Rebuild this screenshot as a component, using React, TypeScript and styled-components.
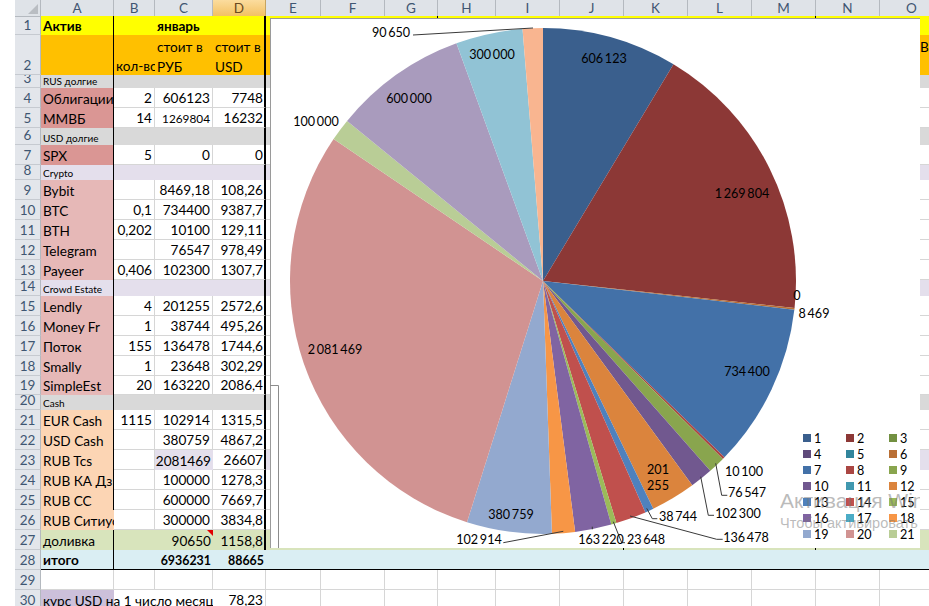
import React from "react";
import styled, { createGlobalStyle } from "styled-components";

const FONT = `Lato, "Open Sans", "Liberation Sans", sans-serif`;
const GRID = "#d6d6d6";
const COLS = "26px 73px 41px 58px 53px 55px 64px 53px 58px 64px 64px 64px 64px 64px 64px 64px";

const Global = createGlobalStyle`
  html, body { margin: 0; padding: 0; background: #fff; overflow: hidden; }
  #root { width: 929px; height: 606px; }
`;

const Screen = styled.div`
  position: relative;
  width: 929px;
  height: 606px;
  overflow: hidden;
  background: #fff;
  font-family: ${FONT};
`;

const Sheet = styled.div`
  display: flex;
  flex-direction: column;
  margin-left: 15px;
  width: 1000px;
`;

const HeaderRow = styled.div`
  display: grid;
  grid-template-columns: ${COLS};
  height: 16px;
`;

const Corner = styled.div`
  position: relative;
  background: #dfe3e8;
  border-right: 1px solid #b4b9bf;
  border-bottom: 1px solid #b4b9bf;
  box-sizing: border-box;
  &::after {
    content: "";
    position: absolute;
    right: 2px;
    bottom: 2px;
    border-style: solid;
    border-width: 0 0 10px 10px;
    border-color: transparent transparent #b9bdc2 transparent;
  }
`;

const ColumnLetter = styled.div<{ $active?: boolean }>`
  box-sizing: border-box;
  display: flex;
  align-items: center;
  justify-content: center;
  font-size: 13.5px;
  line-height: 16px;
  color: ${(p) => (p.$active ? "#6a4a20" : "#3f5672")};
  background: ${(p) => (p.$active ? "linear-gradient(#fbdc9e, #f3c163)" : "#dfe3e8")};
  border-right: 1px solid ${(p) => (p.$active ? "#c6a45f" : "#b4b9bf")};
  border-bottom: 1px solid ${(p) => (p.$active ? "#c6a45f" : "#b4b9bf")};
`;

const Row = styled.div<{ $h: number }>`
  display: grid;
  grid-template-columns: ${COLS};
  height: ${(p) => p.$h}px;
`;

const RowNumber = styled.div`
  box-sizing: border-box;
  display: flex;
  align-items: flex-end;
  justify-content: center;
  font-size: 13.5px;
  line-height: 17px;
  color: #3f5672;
  background: #e3e6eb;
  border-right: 1px solid #b4b9bf;
  border-bottom: 1px solid #c6cad0;
  overflow: hidden;
`;

const Cell = styled.div<{
  $fill?: string;
  $right?: boolean;
  $small?: boolean;
  $bold?: boolean;
  $lineRight?: "thin" | "thick";
  $bottom?: boolean;
  $size?: number;
}>`
  position: relative;
  box-sizing: border-box;
  min-width: 0;
  display: flex;
  align-items: flex-end;
  justify-content: ${(p) => (p.$right ? "flex-end" : "flex-start")};
  padding: 0 ${(p) => (p.$lineRight === "thick" ? "1px" : "2px")} 0 2px;
  overflow: hidden;
  white-space: nowrap;
  color: #000;
  font-size: ${(p) => (p.$size ? p.$size : p.$small ? 10 : 13.6)}px;
  line-height: ${(p) => (p.$small ? 14 : 17)}px;
  font-weight: ${(p) => (p.$bold ? 700 : 400)};
  background: ${(p) => p.$fill ?? "#fff"};
  border-right: ${(p) =>
    p.$lineRight === "thin"
      ? "1px solid #000"
      : p.$lineRight === "thick"
        ? "2px solid #000"
        : p.$fill
          ? "none"
          : `1px solid ${GRID}`};
  border-bottom: ${(p) =>
    p.$bottom ? "1px solid #000" : p.$fill ? "none" : `1px solid ${GRID}`};
`;

const Wrapped = styled.span`
  white-space: normal;
  line-height: 20px;
  margin-bottom: -2px;
`;

const OverflowLabel = styled(Cell)`
  grid-column: span 3;
  background: linear-gradient(#ccc0da, #ccc0da) 0 0 / 73px 100% no-repeat;
  border-right: none;
  border-bottom: none;
  padding-left: 2px;
`;

const Comment = styled.span`
  position: absolute;
  top: 0;
  right: 0;
  border-style: solid;
  border-width: 0 6px 6px 0;
  border-color: transparent #e00000 transparent transparent;
`;

const Tick = styled(Cell)`
  border-right: 1px solid #000;
`;

const EdgeLetter = styled.span`
  align-self: flex-start;
  margin: 4px 0 0 38px;
  line-height: 17px;
`;

const ChartPanel = styled.div`
  position: absolute;
  left: 270px;
  top: 18px;
  width: 650px;
  height: 530px;
  background: #fff;
  box-sizing: border-box;
  box-shadow: inset 1px 1px 0 #9a9a9a;
`;

const ChartArt = styled.svg`
  display: block;
  width: 650px;
  height: 530px;
`;

const ChartLabel = styled.text`
  font-family: ${FONT};
  font-size: 12.6px;
  word-spacing: -1.5px;
  fill: #000;
  text-anchor: middle;
  dominant-baseline: central;
`;

const Legend = styled.div`
  position: absolute;
  left: 533px;
  top: 412px;
  display: grid;
  grid-template-columns: repeat(3, 43px);
  grid-auto-rows: 16px;
`;

const LegendItem = styled.div`
  display: flex;
  align-items: center;
  gap: 3px;
  font-size: 12.6px;
  color: #000;
`;

const Swatch = styled.i<{ $c: string }>`
  display: block;
  width: 8px;
  height: 8px;
  background: ${(p) => p.$c};
`;

const Watermark = styled.div`
  position: absolute;
  left: 780px;
  top: 489px;
  width: 140px;
  overflow: hidden;
  white-space: nowrap;
  color: rgba(120, 120, 120, 0.5);
  font-family: "Liberation Sans", sans-serif;
  pointer-events: none;
`;

const WatermarkTitle = styled.div`
  font-size: 21px;
  line-height: 24px;
`;

const WatermarkHint = styled.div`
  font-size: 14.5px;
  line-height: 20px;
`;

const GRAY = "#d9d9d9";
const LILAC = "#e4dfec";
const ROSE = "#da9694";
const PINK = "#e6b8b7";
const PEACH = "#fcd5b4";
const GREEN = "#d8e4bc";
const SKY = "#daeef3";
const YELLOW = "#ffff00";
const ORANGE = "#ffc000";

type R = {
  n: number;
  h: number;
  a?: string;
  b?: string;
  c?: string;
  d?: string;
  af?: string;
  fill?: string;
  small?: boolean;
  cSize?: number;
};

const rows: R[] = [
  { n: 3, h: 13, a: "RUS долгие", af: GRAY, fill: GRAY, small: true },
  { n: 4, h: 20, a: "Облигации", af: ROSE, b: "2", c: "606123", d: "7748" },
  { n: 5, h: 20, a: "ММВБ", af: ROSE, b: "14", c: "1269804", d: "16232", cSize: 11.8 },
  { n: 6, h: 17, a: "USD долгие", af: GRAY, fill: GRAY, small: true },
  { n: 7, h: 20, a: "SPX", af: ROSE, b: "5", c: "0", d: "0" },
  { n: 8, h: 15, a: "Crypto", af: LILAC, fill: LILAC, small: true },
  { n: 9, h: 20, a: "Bybit", af: PINK, c: "8469,18", d: "108,26" },
  { n: 10, h: 20, a: "BTC", af: PINK, b: "0,1", c: "734400", d: "9387,7" },
  { n: 11, h: 20, a: "BTH", af: PINK, b: "0,202", c: "10100", d: "129,11" },
  { n: 12, h: 20, a: "Telegram", af: PINK, c: "76547", d: "978,49" },
  { n: 13, h: 20, a: "Payeer", af: PINK, b: "0,406", c: "102300", d: "1307,7" },
  { n: 14, h: 16, a: "Crowd Estate", af: LILAC, fill: LILAC, small: true },
  { n: 15, h: 20, a: "Lendly", af: PINK, b: "4", c: "201255", d: "2572,6" },
  { n: 16, h: 20, a: "Money Fr", af: PINK, b: "1", c: "38744", d: "495,26" },
  { n: 17, h: 20, a: "Поток", af: PINK, b: "155", c: "136478", d: "1744,6" },
  { n: 18, h: 20, a: "Smally", af: PINK, b: "1", c: "23648", d: "302,29" },
  { n: 19, h: 19, a: "SimpleEst", af: PINK, b: "20", c: "163220", d: "2086,4" },
  { n: 20, h: 15, a: "Cash", af: GRAY, fill: GRAY, small: true },
  { n: 21, h: 20, a: "EUR Cash", af: PEACH, b: "1115", c: "102914", d: "1315,5" },
  { n: 22, h: 20, a: "USD Cash", af: PEACH, c: "380759", d: "4867,2" },
  { n: 23, h: 20, a: "RUB Tcs", af: PEACH, c: "2081469", d: "26607" },
  { n: 24, h: 20, a: "RUB КА Дз", af: PEACH, c: "100000", d: "1278,3" },
  { n: 25, h: 20, a: "RUB CC", af: PEACH, c: "600000", d: "7669,7" },
  { n: 26, h: 20, a: "RUB Ситиус", af: PEACH, c: "300000", d: "3834,8" },
];

const letters = ["A", "B", "C", "D", "E", "F", "G", "H", "I", "J", "K", "L", "M", "N", "O"];
const blankCols = letters.slice(4);

const Blanks = ({
  fill,
  bottom,
  ticks = [],
  edge,
}: {
  fill?: string;
  bottom?: boolean;
  ticks?: string[];
  edge?: string;
}) => (
  <>
    {blankCols.map((l) =>
      ticks.includes(l) ? (
        <Tick key={l} $fill={fill} $bottom={bottom} />
      ) : (
        <Cell key={l} $fill={fill} $bottom={bottom}>
          {l === "O" && edge ? <EdgeLetter>{edge}</EdgeLetter> : null}
        </Cell>
      ),
    )}
  </>
);

const CX = 543;
const CY = 281;
const RAD = 253;

const slices: [number, string][] = [
  [606123, "#3a5f8d"],
  [1269804, "#8c3836"],
  [8469, "#b96f35"],
  [734400, "#4371a8"],
  [10100, "#aa4643"],
  [76547, "#89a54e"],
  [102300, "#71588f"],
  [201255, "#db843d"],
  [38744, "#4f81bd"],
  [136478, "#c0504d"],
  [23648, "#9bbb59"],
  [163220, "#8064a2"],
  [102914, "#f79646"],
  [380759, "#93a9cf"],
  [2081469, "#d19392"],
  [100000, "#b9cd96"],
  [600000, "#a99bbd"],
  [300000, "#91c3d5"],
  [90650, "#f9b590"],
];

const total = slices.reduce((s, [v]) => s + v, 0);

function slicePaths() {
  let cum = 0;
  return slices.map(([v, c]) => {
    const a0 = (cum / total) * Math.PI * 2;
    cum += v;
    const a1 = (cum / total) * Math.PI * 2;
    const p = (a: number) => `${CX + RAD * Math.sin(a)} ${CY - RAD * Math.cos(a)}`;
    const large = a1 - a0 > Math.PI ? 1 : 0;
    return { d: `M${CX} ${CY}L${p(a0)}A${RAD} ${RAD} 0 ${large} 1 ${p(a1)}Z`, c };
  });
}

const labels: [string, number, number][] = [
  ["90 650", 391, 32],
  ["300 000", 492, 54],
  ["600 000", 409, 98],
  ["100 000", 316, 121],
  ["606 123", 604, 58],
  ["1 269 804", 742, 193],
  ["0", 797, 295],
  ["8 469", 814, 313],
  ["734 400", 747, 371],
  ["2 081 469", 335, 349],
  ["10 100", 744, 471],
  ["76 547", 747, 492],
  ["102 300", 738, 513],
  ["136 478", 746, 537],
  ["38 744", 678, 516],
  ["201", 658, 469],
  ["255", 658, 485],
  ["380 759", 511, 514],
  ["102 914", 479, 539],
  ["163 220", 601, 539],
  ["23 648", 646, 539],
];

const leaders = [
  "413,35 533,28",
  "715.7,463.3 721.7,495.3 727.3,495.3",
  "700.7,476.7 708.3,515.3 714,515.3",
  "646.7,508.3 652.3,518.7 657.3,518.7",
  "630,516 716.7,539.3 722.7,539.3",
  "613.3,521.7 621.7,542.7 625,542.7",
  "592.3,526.7 592.3,529.3",
  "503.3,542.7 563.3,531.3",
];

const legend = [
  "#3a5f8d", "#8c3836", "#729041",
  "#5f4a7b", "#31859c", "#b96f35",
  "#4371a8", "#aa4643", "#89a54e",
  "#71588f", "#4198af", "#db843d",
  "#4f81bd", "#c0504d", "#9bbb59",
  "#8064a2", "#4bacc6", "#f79646",
  "#93a9cf", "#d19392", "#b9cd96",
];

export default function App() {
  return (
    <Screen>
      <Global />
      <Sheet>
        <HeaderRow>
          <Corner />
          {letters.map((l) => (
            <ColumnLetter key={l} $active={l === "D"}>
              {l}
            </ColumnLetter>
          ))}
        </HeaderRow>

        <Row $h={19}>
          <RowNumber>1</RowNumber>
          <Cell $fill={YELLOW} $bold $lineRight="thin">Актив</Cell>
          <Cell $fill={YELLOW} />
          <Cell $fill={YELLOW} $bold>январь</Cell>
          <Cell $fill={YELLOW} $lineRight="thick" />
          <Blanks fill={YELLOW} ticks={["G", "M"]} />
        </Row>

        <Row $h={40}>
          <RowNumber>2</RowNumber>
          <Cell $fill={ORANGE} $lineRight="thin" />
          <Cell $fill={ORANGE}>кол-во</Cell>
          <Cell $fill={ORANGE}><Wrapped>стоит в РУБ</Wrapped></Cell>
          <Cell $fill={ORANGE} $lineRight="thick"><Wrapped>стоит в USD</Wrapped></Cell>
          <Blanks fill={ORANGE} edge="В" />
        </Row>

        {rows.map((r) => (
          <Row key={r.n} $h={r.h}>
            <RowNumber>{r.n}</RowNumber>
            <Cell $fill={r.af} $small={r.small} $lineRight={r.n === 26 ? undefined : "thin"}>{r.a}</Cell>
            <Cell $fill={r.fill} $right>{r.b}</Cell>
            <Cell $fill={r.fill ?? (r.n === 23 ? LILAC : undefined)} $right $size={r.cSize}>{r.c}</Cell>
            <Cell $fill={r.fill} $right $lineRight="thick">{r.d}</Cell>
            <Blanks fill={r.fill ?? (r.n === 23 ? LILAC : undefined)} />
          </Row>
        ))}

        <Row $h={20}>
          <RowNumber>27</RowNumber>
          <Cell $fill={GREEN} $lineRight="thin">доливка</Cell>
          <Cell $fill={GREEN} />
          <Cell $fill={GREEN} $right>90650<Comment /></Cell>
          <Cell $fill={GREEN} $right $lineRight="thick">1158,8</Cell>
          <Blanks fill={GREEN} ticks={["J", "M"]} />
        </Row>

        <Row $h={20}>
          <RowNumber>28</RowNumber>
          <Cell $fill={SKY} $bold $bottom $lineRight="thin">итого</Cell>
          <Cell $fill={SKY} $bottom />
          <Cell $fill={SKY} $bold $right $bottom $size={12.4}>6936231</Cell>
          <Cell $fill={SKY} $bold $right $bottom $size={12.4}>88665</Cell>
          <Blanks fill={SKY} bottom />
        </Row>

        <Row $h={20}>
          <RowNumber>29</RowNumber>
          <Cell />
          <Cell />
          <Cell />
          <Cell />
          <Blanks />
        </Row>

        <Row $h={20}>
          <RowNumber>30</RowNumber>
          <OverflowLabel>курс USD на 1 число месяца</OverflowLabel>
          <Cell $right>78,23</Cell>
          <Blanks />
        </Row>
      </Sheet>

      <ChartPanel>
        <ChartArt viewBox="270 18 650 530">
          <polyline points="270,385.5 278.5,385.5 278.5,548" fill="none" stroke="#8c8c8c" strokeWidth="1" />
          {slicePaths().map((s, i) => (
            <path key={i} d={s.d} fill={s.c} />
          ))}
          {leaders.map((p) => (
            <polyline key={p} points={p} fill="none" stroke="#3a3a3a" strokeWidth="1" />
          ))}
          {labels.map(([t, x, y]) => (
            <ChartLabel key={t} x={x} y={y}>{t}</ChartLabel>
          ))}
        </ChartArt>
        <Legend>
          {legend.map((c, i) => (
            <LegendItem key={i}>
              <Swatch $c={c} />
              {i + 1}
            </LegendItem>
          ))}
        </Legend>
      </ChartPanel>

      <Watermark>
        <WatermarkTitle>Активация Windows</WatermarkTitle>
        <WatermarkHint>Чтобы активировать Windows</WatermarkHint>
      </Watermark>
    </Screen>
  );
}
